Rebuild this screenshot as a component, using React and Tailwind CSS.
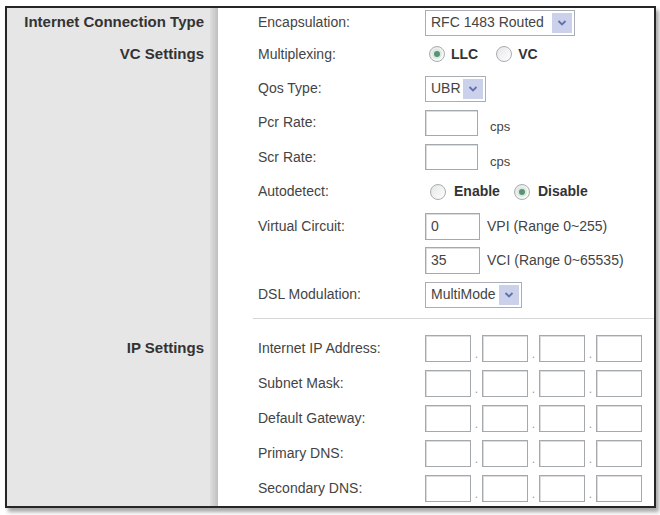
const FONT = "font-['Liberation_Sans',Arial,sans-serif]";

const Chevron = () => (
  <svg width="10" height="8" viewBox="0 0 10 8">
    <polyline points="1.5,2 5,5.5 8.5,2" fill="none" stroke="#5f72ad" strokeWidth="1.8" />
  </svg>
);

const Select = ({ value, w }) => (
  <div className={`${w} h-[26px] flex border border-[#a9aeb6] bg-white p-[2px]`}>
    <span className="flex-1 flex items-center pl-[3px] text-[14px] text-[#444] whitespace-nowrap">{value}</span>
    <span className="w-[20px] bg-[#cbd1ea] flex items-center justify-center"><Chevron /></span>
  </div>
);

const Input = ({ value, w = 'w-[53px]', h = 'h-[26px]' }) => (
  <div className={`${w} ${h} border border-[#a4a9ae] shadow-[inset_1px_1px_0_#dcdcdc] bg-white flex items-center pl-[5px] text-[14px] text-[#444]`}>{value}</div>
);

const Radio = ({ checked }) => (
  <span className="w-[16px] h-[16px] rounded-full border border-[#a8adb1] bg-gradient-to-br from-[#e4e6e5] to-white flex items-center justify-center">
    {checked && <span className="w-[6px] h-[6px] rounded-full bg-[#5b9176] shadow-[0_0_0_2px_#d9ebe0]" />}
  </span>
);

const Row = ({ side, label, h = 'h-[34.4px]', children }) => (
  <div className={`flex ${h}`}>
    <div className="w-[203px] bg-[#e6e6e6] flex items-center justify-end pr-[6px] font-bold text-[15px] text-[#333]">{side}</div>
    <div className="w-[8px] bg-gradient-to-r from-[#dedede] to-[#c0c0c0]" />
    <div className="flex-1 flex items-center pl-[40px]">
      <div className="w-[167px] text-[14px] text-[#444] whitespace-nowrap">{label}</div>
      {children}
    </div>
  </div>
);

const IpBoxes = () => (
  <div className="flex items-center">
    {[0, 1, 2, 3].map(i => (
      <div key={i} className="flex items-end">
        {i > 0 && <span className="w-[11px] text-center text-[12px] leading-none text-[#999] pb-[2px]">.</span>}
        <div className="w-[46px] h-[27px] border border-[#a4a9ae] shadow-[inset_1px_1px_0_#dcdcdc] bg-white" />
      </div>
    ))}
  </div>
);

export default function App() {
  return (
    <div className={`w-[660px] h-[515px] bg-white pt-[6px] pl-[5px] ${FONT}`}>
      <div className="w-[651px] border-2 border-[#262626] bg-white shadow-[3px_4px_4px_rgba(0,0,0,0.35)]">
        <Row side="Internet Connection Type" label="Encapsulation:" h="h-[29px]">
          <Select value="RFC 1483 Routed" w="w-[150px]" />
        </Row>
        <Row side="VC Settings" label="Multiplexing:">
          <div className="flex items-center ml-[4px] font-bold text-[14px] text-[#333]">
            <Radio checked />
            <span className="ml-[6px]">LLC</span>
            <span className="ml-[18px]"><Radio /></span>
            <span className="ml-[6px]">VC</span>
          </div>
        </Row>
        <Row label="Qos Type:">
          <Select value="UBR" w="w-[61px]" />
        </Row>
        <Row label="Pcr Rate:">
          <Input />
          <span className="ml-[12px] pt-[8px] text-[13px] text-[#444]">cps</span>
        </Row>
        <Row label="Scr Rate:">
          <Input />
          <span className="ml-[12px] pt-[8px] text-[13px] text-[#444]">cps</span>
        </Row>
        <Row label="Autodetect:">
          <div className="flex items-center ml-[5px] font-bold text-[14px] text-[#333]">
            <Radio />
            <span className="ml-[8px]">Enable</span>
            <span className="ml-[14px]"><Radio checked /></span>
            <span className="ml-[8px]">Disable</span>
          </div>
        </Row>
        <Row label="Virtual Circuit:">
          <Input value="0" w="w-[55px]" h="h-[27px]" />
          <span className="ml-[7px] text-[14px] text-[#444] whitespace-nowrap">VPI (Range 0~255)</span>
        </Row>
        <Row label="">
          <Input value="35" w="w-[55px]" h="h-[27px]" />
          <span className="ml-[7px] text-[14px] text-[#444] whitespace-nowrap">VCI (Range 0~65535)</span>
        </Row>
        <Row label="DSL Modulation:">
          <Select value="MultiMode" w="w-[97px]" />
        </Row>
        <div className="flex h-[19px]">
          <div className="w-[203px] bg-[#e6e6e6]" />
          <div className="w-[8px] bg-gradient-to-r from-[#dedede] to-[#c0c0c0]" />
          <div className="flex-1 pt-[6px] pl-[35px]">
            <div className="border-t border-[#d6d6d6]" />
          </div>
        </div>
        <Row side="IP Settings" label="Internet IP Address:" h="h-[35px]"><IpBoxes /></Row>
        <Row label="Subnet Mask:" h="h-[35px]"><IpBoxes /></Row>
        <Row label="Default Gateway:" h="h-[35px]"><IpBoxes /></Row>
        <Row label="Primary DNS:" h="h-[35px]"><IpBoxes /></Row>
        <Row label="Secondary DNS:" h="h-[35px]"><IpBoxes /></Row>
      </div>
    </div>
  );
}
